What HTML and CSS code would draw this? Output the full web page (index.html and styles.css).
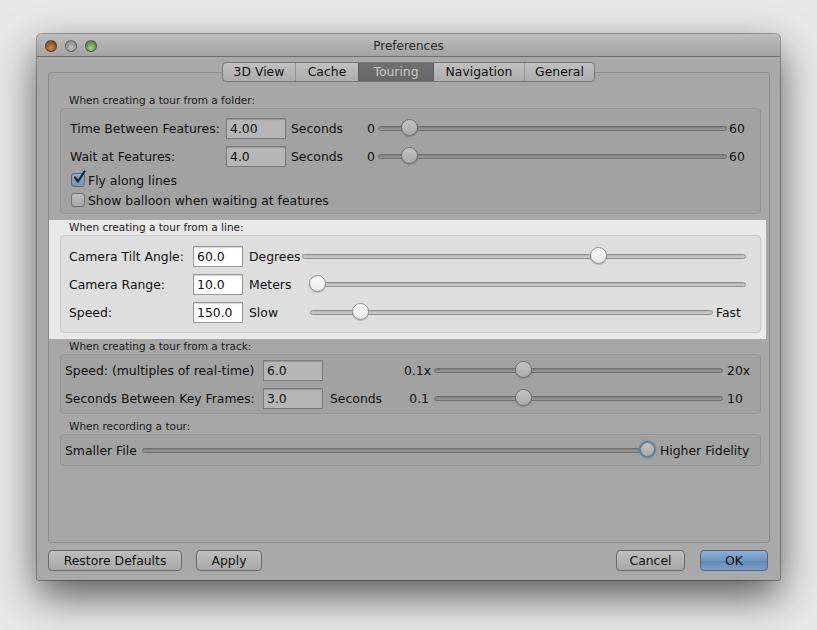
FILE: index.html
```html
<!DOCTYPE html>
<html>
<head>
<meta charset="utf-8">
<title>Preferences</title>
<link rel="stylesheet" href="styles.css">
</head>
<body>
<div class="window">
  <div class="titlebar">
    <div class="lights">
      <span class="light red"></span>
      <span class="light grey"></span>
      <span class="light green"></span>
    </div>
    <div class="title">Preferences</div>
  </div>

  <div class="tabs">
    <div class="tab t1">3D View</div>
    <div class="tab t2">Cache</div>
    <div class="tab t3 selected">Touring</div>
    <div class="tab t4">Navigation</div>
    <div class="tab t5">General</div>
  </div>

  <div class="panel">
    <section class="sec sec1">
      <div class="caption">When creating a tour from a folder:</div>
      <div class="box box1">
        <div class="row">
          <span class="lbl w156">Time Between Features:</span>
          <span class="field w60">4.00</span>
          <span class="unit u76">Seconds</span>
          <span class="minl w11">0</span>
          <div class="slider s349"><div class="track"></div><div class="knob" style="left:23px"></div></div>
          <span class="maxl">60</span>
        </div>
        <div class="row">
          <span class="lbl w156">Wait at Features:</span>
          <span class="field w60">4.0</span>
          <span class="unit u76">Seconds</span>
          <span class="minl w11">0</span>
          <div class="slider s349"><div class="track"></div><div class="knob" style="left:23px"></div></div>
          <span class="maxl">60</span>
        </div>
        <div class="crow">
          <span class="check on"><svg width="14" height="14" viewBox="0 0 14 14"><path d="M3 6.5 L6 10.5 L12.5 0.5" fill="none" stroke="#14233a" stroke-width="2.2" stroke-linecap="round" stroke-linejoin="round"/></svg></span>
          <span>Fly along lines</span>
        </div>
        <div class="crow">
          <span class="check"></span>
          <span>Show balloon when waiting at features</span>
        </div>
      </div>
    </section>

    <section class="sec hl">
      <div class="caption">When creating a tour from a line:</div>
      <div class="box box2">
        <div class="row">
          <span class="lbl w124">Camera Tilt Angle:</span>
          <span class="field w50">60.0</span>
          <span class="unit ua">Degrees</span>
          <div class="slider s444"><div class="track"></div><div class="knob" style="left:288px"></div></div>
        </div>
        <div class="row">
          <span class="lbl w124">Camera Range:</span>
          <span class="field w50">10.0</span>
          <span class="unit ub">Meters</span>
          <div class="slider s437"><div class="track"></div><div class="knob" style="left:0px"></div></div>
        </div>
        <div class="row">
          <span class="lbl w124">Speed:</span>
          <span class="field w50">150.0</span>
          <span class="unit uc">Slow</span>
          <div class="slider s403"><div class="track"></div><div class="knob" style="left:42px"></div></div>
          <span class="maxl fast">Fast</span>
        </div>
      </div>
    </section>

    <section class="sec sec3">
      <div class="caption">When creating a tour from a track:</div>
      <div class="box box3">
        <div class="row">
          <span class="lbl w198">Speed: (multiples of real-time)</span>
          <span class="field w60">6.0</span>
          <span class="unit u70"></span>
          <span class="minl w31">0.1x</span>
          <div class="slider s289"><div class="track"></div><div class="knob" style="left:81px"></div></div>
          <span class="maxl m4">20x</span>
        </div>
        <div class="row">
          <span class="lbl w198">Seconds Between Key Frames:</span>
          <span class="field w60">3.0</span>
          <span class="unit u70">Seconds</span>
          <span class="minl w31 pr4">0.1</span>
          <div class="slider s289"><div class="track"></div><div class="knob" style="left:81px"></div></div>
          <span class="maxl m4">10</span>
        </div>
      </div>
    </section>

    <section class="sec sec4">
      <div class="caption">When recording a tour:</div>
      <div class="box box4">
        <div class="row r30">
          <span class="lbl w77">Smaller File</span>
          <div class="slider s514"><div class="track t506"></div><div class="knob focus" style="left:497px"></div></div>
          <span class="maxl m4">Higher Fidelity</span>
        </div>
      </div>
    </section>
  </div>

  <div class="buttons">
    <div class="btn restore">Restore Defaults</div>
    <div class="btn apply">Apply</div>
    <div class="spacer"></div>
    <div class="btn cancel">Cancel</div>
    <div class="btn ok">OK</div>
  </div>
</div>
</body>
</html>
```

FILE: styles.css
```css
html, body {
  margin: 0;
  padding: 0;
}
body {
  width: 817px;
  height: 630px;
  overflow: hidden;
  background: #e8e8e8;
  font-family: "DejaVu Sans", "Liberation Sans", sans-serif;
  font-size: 12.4px;
  color: #111111;
}
.window {
  margin: 34px 0 0 37px;
  width: 743px;
  height: 546px;
  box-sizing: border-box;
  background: #a9a9a9;
  border-radius: 5px 5px 2px 2px;
  box-shadow: 0 0 0 1px rgba(0,0,0,0.3), 0 16px 40px rgba(0,0,0,0.62);
  display: flex;
  flex-direction: column;
}
.titlebar {
  height: 22px;
  flex: none;
  border-bottom: 1px solid #6e6e6e;
  background: linear-gradient(#bdbdbd, #a3a3a3);
  border-radius: 5px 5px 0 0;
  display: flex;
  align-items: center;
  position: relative;
}
.lights {
  display: flex;
  gap: 8px;
  padding-left: 8px;
  padding-top: 2px;
}
.light {
  width: 12px;
  height: 12px;
  border-radius: 50%;
  box-sizing: border-box;
  border: 1px solid rgba(0,0,0,0.35);
}
.light.red { background: radial-gradient(circle at 50% 70%, #c98a4a, #8a5326 70%); }
.light.grey { background: radial-gradient(circle at 50% 70%, #c2c2c2, #8e8e8e 70%); }
.light.green { background: radial-gradient(circle at 50% 70%, #a7c98a, #5f8a42 70%); }
.title {
  position: absolute;
  left: 0;
  right: 0;
  top: 5px;
  text-align: center;
  color: #2a2a2a;
  font-size: 12px;
}
.tabs {
  flex: none;
  margin: 5px auto -10px;
  height: 20px;
  display: flex;
  position: relative;
  z-index: 2;
  border: 1px solid #767676;
  border-radius: 4px;
  box-sizing: border-box;
  overflow: hidden;
  background: linear-gradient(#c0c0c0, #adadad);
}
.tab {
  height: 18px;
  line-height: 18px;
  text-align: center;
  border-left: 1px solid #929292;
  box-sizing: border-box;
  color: #111111;
}
.tab.t1 { width: 72px; border-left: none; }
.tab.t2 { width: 63px; }
.tab.t3 { width: 75px; }
.tab.t4 { width: 91px; }
.tab.t5 { width: 70px; }
.tab.selected {
  background: linear-gradient(#707070, #676767);
  color: #c9c9c9;
  border-left: 1px solid #5a5a5a;
}
.tab.t4 { border-left: 1px solid #5a5a5a; }
.panel {
  flex: 1;
  margin: 0 10px 0 11px;
  border: 1px solid #8b8b8b;
  border-radius: 3px;
  background: #a7a7a7;
  padding-top: 20px;
  box-sizing: border-box;
}
.sec {
  padding: 0 8px 0 11px;
}
.caption {
  height: 15px;
  line-height: 15px;
  font-size: 10.5px;
  padding-left: 9px;
  color: #1a1a1a;
}
.box {
  border: 1px solid #959595;
  border-radius: 4px;
  background: #a2a2a2;
  box-sizing: border-box;
}
.box1 { padding: 5px 0 3px 9px; }
.hl {
  margin-top: 6px;
  background: #e9e9e9;
  padding-bottom: 6px;
  margin-right: 3px;
  padding-right: 5px;
}
.hl .box {
  background: #dedede;
  border-color: #c9c9c9;
}
.box2 { padding: 6px 0 6px 8px; }
.box3 { padding: 1px 0 1px 4px; }
.sec4 { margin-top: 5px; }
.box4 { padding: 0 0 0 4px; }
.row {
  height: 28px;
  display: flex;
  align-items: center;
  white-space: nowrap;
}
.row.r30 { height: 30px; }
.crow {
  height: 20px;
  display: flex;
  align-items: center;
  padding-left: 1px;
}
.lbl { flex: none; }
.w156 { width: 156px; }
.w124 { width: 124px; }
.w198 { width: 198px; }
.w77 { width: 77px; }
.field {
  flex: none;
  height: 21px;
  line-height: 19px;
  box-sizing: border-box;
  border: 1px solid #7b7b7b;
  background: #b6b6b6;
  box-shadow: inset 0 1px 1px rgba(0,0,0,0.18);
  padding-left: 3px;
}
.hl .field {
  background: #ffffff;
  border-color: #9a9a9a;
}
.w60 { width: 60px; }
.w50 { width: 50px; }
.unit { flex: none; margin-left: 5px; }
.u76 { width: 76px; }
.u70 { width: 70px; margin-left: 7px; }
.ua { width: 53px; margin-left: 6px; }
.ub { width: 60px; margin-left: 6px; }
.uc { width: 61px; margin-left: 6px; }
.minl { flex: none; }
.w11 { width: 11px; }
.w31 { width: 31px; text-align: right; margin-right: 3px; }
.w31.pr4 { padding-right: 2px; box-sizing: border-box; }
.maxl { flex: none; margin-left: 2px; }
.maxl.m4 { margin-left: 4px; }
.maxl.fast { margin-left: 3px; }
.slider {
  flex: none;
  height: 18px;
  position: relative;
  display: flex;
  align-items: center;
}
.s349 { width: 349px; }
.s444 { width: 444px; }
.s437 { width: 437px; }
.s403 { width: 403px; }
.s289 { width: 289px; }
.s514 { width: 514px; }
.track {
  width: 100%;
  height: 5px;
  box-sizing: border-box;
  border: 1px solid #6d6d6d;
  border-radius: 3px;
  background: linear-gradient(#7f7f7f, #9a9a9a);
}
.track.t506 { width: 506px; }
.hl .track {
  border-color: #8f8f8f;
  background: linear-gradient(#b4b4b4, #cfcfcf);
}
.knob {
  position: absolute;
  top: 0;
  width: 17px;
  height: 17px;
  box-sizing: border-box;
  border-radius: 50%;
  border: 1px solid #6e6e6e;
  background: linear-gradient(#c4c4c4, #a9a9a9);
  box-shadow: 0 1px 1px rgba(0,0,0,0.2);
}
.hl .knob {
  border-color: #8e8e8e;
  background: linear-gradient(#ffffff, #e6e6e6);
}
.knob.focus {
  border: 2px solid #5f7f9c;
  box-shadow: 0 0 2px #5f7f9c;
}
.check {
  flex: none;
  width: 14px;
  height: 14px;
  box-sizing: border-box;
  border: 1px solid #6f6f6f;
  border-radius: 3px;
  background: linear-gradient(#bcbcbc, #a8a8a8);
  margin-right: 3px;
  position: relative;
}
.check.on {
  background: linear-gradient(#9aaabe, #7e92aa);
  border-color: #56687f;
}
.check svg {
  position: absolute;
  left: 0;
  top: -3px;
  overflow: visible;
}
.buttons {
  flex: none;
  height: 21px;
  margin: 7px 12px 9px 11px;
  display: flex;
}
.spacer { flex: 1; }
.btn {
  height: 21px;
  box-sizing: border-box;
  border: 1px solid #6a6a6a;
  border-radius: 4px;
  background: linear-gradient(#bdbdbd, #a9a9a9);
  text-align: center;
  line-height: 19px;
  color: #111111;
}
.restore { width: 134px; }
.apply { width: 66px; margin-left: 14px; }
.cancel { width: 69px; }
.ok {
  width: 68px;
  margin-left: 15px;
  border-color: #4c6886;
  background: linear-gradient(#8fb0d2 0%, #6e95bf 50%, #5f88b5 51%, #7aa0c8 100%);
}
```
